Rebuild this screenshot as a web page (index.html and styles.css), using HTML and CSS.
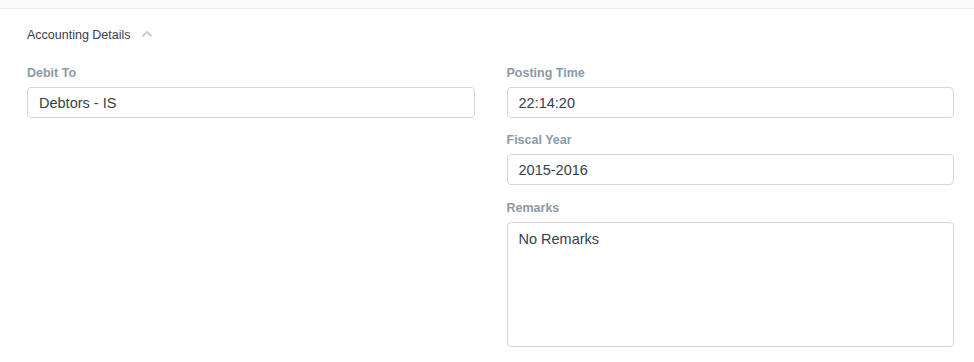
FILE: index.html
```html
<!DOCTYPE html>
<html lang="en">
<head>
    <meta charset="UTF-8">
    <title>Sales Invoice - Accounting Details</title>
    <link rel="stylesheet" href="styles.css">
</head>
<body>
    <div class="topbar"></div>

    <div class="section">
        <div class="section-head">
            <span>Accounting Details</span>
            <svg class="collapse-icon" width="12" height="8" viewBox="0 0 12 8">
                <path d="M1.5 6.5 L6 2 L10.5 6.5" fill="none" stroke="#c8cfd5" stroke-width="2"/>
            </svg>
        </div>

        <div class="columns">
            <div class="column">
                <div class="field">
                    <label>Debit To</label>
                    <div class="control">Debtors - IS</div>
                </div>
            </div>
            <div class="column">
                <div class="field">
                    <label>Posting Time</label>
                    <div class="control">22:14:20</div>
                </div>
                <div class="field">
                    <label>Fiscal Year</label>
                    <div class="control">2015-2016</div>
                </div>
                <div class="field remarks">
                    <label>Remarks</label>
                    <div class="control textarea">No Remarks</div>
                </div>
            </div>
        </div>
    </div>
</body>
</html>
```

FILE: styles.css
```css
body {
    margin: 0;
    font-family: "Liberation Sans", Arial, sans-serif;
    color: #36414c;
    background-color: #fff;
}

/* bande grise en haut */
.topbar {
    height: 8px;
    background-color: #f8f9fb;
    border-bottom: 1px solid #ebeef0;
}

.section {
    padding: 16px 20px 0 27px;
}

.section-head {
    display: flex;
    align-items: center;
    height: 20px;
    font-size: 12.5px;
    color: #36414c;
    margin-bottom: 18px;
}

.collapse-icon {
    margin-left: 10px;
    margin-top: -2px;
}

.columns {
    display: grid;
    grid-template-columns: 1fr 1fr;
    column-gap: 32px;
}

.field {
    margin-bottom: 12px;
}

.field label {
    display: block;
    font-size: 12.5px;
    font-weight: bold;
    color: #8d99a6;
    line-height: 18px;
    padding-top: 1px;
    margin-bottom: 5px;
}

.field.remarks {
    margin-top: 13px;
}

.control {
    height: 31px;
    box-sizing: border-box;
    border: 1px solid #d1d8dd;
    border-radius: 4px;
    padding: 0 11px;
    font-size: 14.5px;
    line-height: 30px;
    color: #36414c;
}

.control.textarea {
    height: 125px;
    padding-top: 1px;
}
```
